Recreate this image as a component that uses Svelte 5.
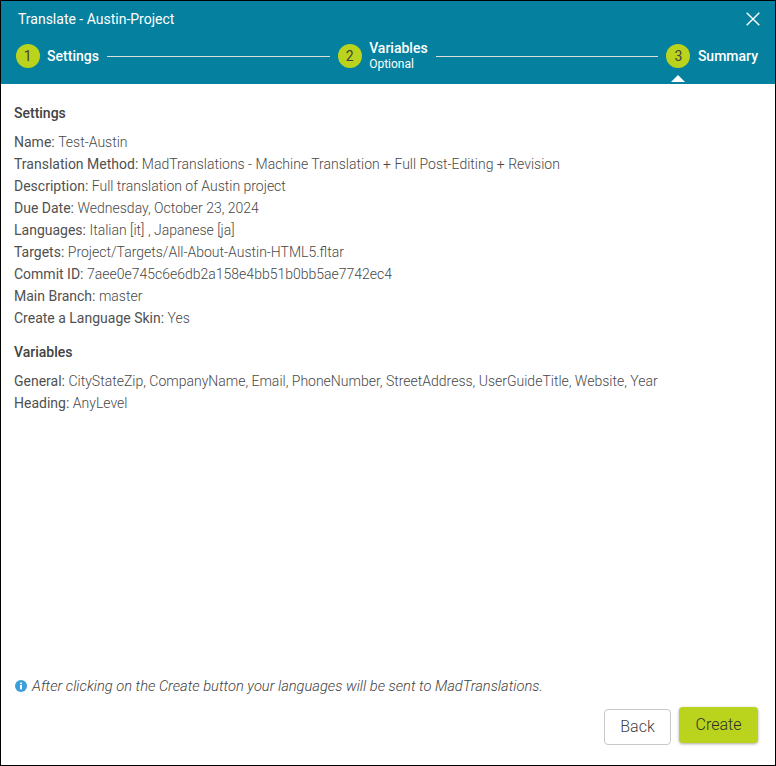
<script lang="ts">
	const settings = [
		['Name', 'Test-Austin'],
		['Translation Method', 'MadTranslations - Machine Translation + Full Post-Editing + Revision'],
		['Description', 'Full translation of Austin project'],
		['Due Date', 'Wednesday, October 23, 2024'],
		['Languages', 'Italian [it] , Japanese [ja]'],
		['Targets', 'Project/Targets/All-About-Austin-HTML5.fltar'],
		['Commit ID', '7aee0e745c6e6db2a158e4bb51b0bb5ae7742ec4'],
		['Main Branch', 'master'],
		['Create a Language Skin', 'Yes']
	];
	const variables = [
		['General', 'CityStateZip, CompanyName, Email, PhoneNumber, StreetAddress, UserGuideTitle, Website, Year'],
		['Heading', 'AnyLevel']
	];
</script>

<div class="dialog">
	<header class="head">
		<div class="title-row">
			<span class="title">Translate - Austin-Project</span>
			<svg class="close" width="14" height="14" viewBox="0 0 14 14" aria-label="Close">
				<path d="M0.7 0.7 L13.3 13.3 M13.3 0.7 L0.7 13.3" stroke="#fff" stroke-width="1.4" fill="none" />
			</svg>
		</div>
		<div class="steps">
			<div class="step">
				<span class="num">1</span>
				<span class="label">Settings</span>
			</div>
			<span class="line"></span>
			<div class="step">
				<span class="num">2</span>
				<span class="label-stack">
					<span class="label">Variables</span>
					<span class="sub">Optional</span>
				</span>
			</div>
			<span class="line"></span>
			<div class="step current">
				<span class="num">3</span>
				<span class="label">Summary</span>
			</div>
		</div>
	</header>

	<main class="body">
		<h2>Settings</h2>
		<div class="rows">
			{#each settings as [k, v]}
				<div class="row">{k}: <span class="val">{v}</span></div>
			{/each}
		</div>
		<h2 class="vars">Variables</h2>
		<div class="rows">
			{#each variables as [k, v]}
				<div class="row">{k}: <span class="val">{v}</span></div>
			{/each}
		</div>
	</main>

	<footer class="foot">
		<p class="note">
			<svg width="12" height="12" viewBox="0 0 12 12" aria-hidden="true">
				<circle cx="6" cy="6" r="6" fill="#3a9fdb" />
				<rect x="5" y="5" width="2" height="4.4" fill="#fff" />
				<rect x="5" y="2.6" width="2" height="1.6" fill="#fff" />
			</svg>
			<em>After clicking on the Create button your languages will be sent to MadTranslations.</em>
		</p>
		<div class="actions">
			<button class="back">Back</button>
			<button class="create">Create</button>
		</div>
	</footer>
</div>

<style>
	:global(body) {
		margin: 0;
		background: #fff;
	}
	.dialog {
		box-sizing: border-box;
		width: 776px;
		height: 766px;
		display: flex;
		flex-direction: column;
		border: 1px solid #000;
		background: #fff;
		font-family: Roboto, "Liberation Sans", sans-serif;
		font-size: 14px;
		color: #424242;
	}
	.head {
		height: 83px;
		box-sizing: border-box;
		background: #05809f;
		color: #fff;
		padding: 0 17px 0 14.7px;
		position: relative;
	}
	.title-row {
		display: flex;
		justify-content: space-between;
		align-items: center;
		height: 36px;
		padding-left: 2.3px;
	}
	.title { font-size: 14px; }
	.close { margin-right: -2px; }
	.steps {
		display: flex;
		align-items: center;
		height: 38px;
	}
	.step {
		display: flex;
		align-items: center;
		gap: 7.4px;
		position: relative;
	}
	.step.current::after {
		content: "";
		position: absolute;
		left: 5px;
		bottom: -14px;
		width: 0;
		height: 0;
		border-left: 7px solid transparent;
		border-right: 7px solid transparent;
		border-bottom: 7px solid #fff;
	}
	.num {
		width: 24px;
		height: 24px;
		border-radius: 50%;
		background: #bad31c;
		color: #424242;
		display: flex;
		align-items: center;
		justify-content: center;
		font-size: 14px;
	}
	.label { font-weight: 500; font-size: 14px; }
	.label-stack {
		display: flex;
		flex-direction: column;
		line-height: 16px;
	}
	.sub { font-size: 12px; }
	.line {
		height: 1px;
		background: #e0dcd8;
		flex: 1;
		margin: 0 8px;
	}
	.body {
		flex: 1;
		padding: 21px 13px 0;
	}
	h2 {
		font-size: 14px;
		font-weight: 500;
		margin: 0 0 10px;
		line-height: 16px;
	}
	h2.vars { margin-top: 15px; }
	.row {
		line-height: 22px;
		white-space: nowrap;
		color: #505050;
	}
	.val { font-weight: 300; color: #484848; }
	.foot {
		padding: 0 17px 20px 14px;
	}
	.note {
		display: flex;
		align-items: center;
		gap: 5px;
		margin: 0 0 13px;
		font-weight: 300;
		font-size: 14.67px;
		line-height: 16px;
	}
	.actions {
		display: flex;
		justify-content: flex-end;
		align-items: flex-start;
		gap: 8px;
	}
	button {
		font-family: inherit;
		font-size: 16px;
		color: #424242;
		border-radius: 4px;
		cursor: pointer;
		padding: 0 0 2px;
	}
	.back {
		width: 67px;
		height: 36px;
		margin-top: 2px;
		background: #fff;
		border: 1px solid #c8c8c8;
		font-weight: 300;
	}
	.create {
		width: 79px;
		height: 36px;
		background: #bad31c;
		border: none;
		box-shadow: 0 1px 3px rgba(0, 0, 0, 0.35);
		font-weight: 300;
		color: #2e2e2e;
	}
</style>
